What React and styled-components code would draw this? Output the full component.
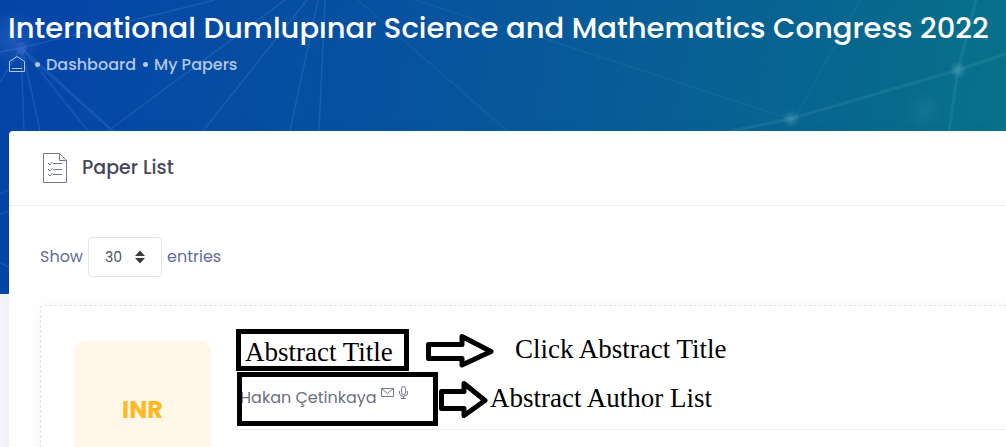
import React, { useState } from 'react';
import styled, { createGlobalStyle } from 'styled-components';

const GlobalStyle = createGlobalStyle`
  * {
    box-sizing: border-box;
  }

  body {
    margin: 0;
    background: #f5f5f9;
    color: #595d6e;
    font-family: Poppins, Inter, 'Open Sans', sans-serif;
    font-size: 16px;
  }
`;

const notes = {
  title: 'Click Abstract Title',
  authors: 'Abstract Author List',
};

function NetworkLines() {
  return (
    <Backdrop viewBox='0 0 1006 294' preserveAspectRatio='xMinYMin slice' aria-hidden='true'>
      <defs>
        <radialGradient id='glow'>
          <stop offset='0' stopColor='#6aa0ea' stopOpacity='0.22' />
          <stop offset='1' stopColor='#6aa0ea' stopOpacity='0' />
        </radialGradient>
        <radialGradient id='node'>
          <stop offset='0' stopColor='#7ab8d0' stopOpacity='0.4' />
          <stop offset='1' stopColor='#7ab8d0' stopOpacity='0' />
        </radialGradient>
      </defs>
      <circle cx='12' cy='38' r='30' fill='url(#glow)' />
      <circle cx='21' cy='48' r='6' fill='#3a62c8' opacity='0.5' />
      <g stroke='#5c94e0' strokeWidth='1.5' opacity='0.22' fill='none'>
        <path d='M21 48 L215 0' />
        <path d='M21 48 L0 52' />
        <path d='M21 48 L0 82' />
        <path d='M21 48 L24 131' />
        <path d='M22 48 L40 131' />
        <path d='M22 48 L88 131' />
        <path d='M22 48 L118 135' />
        <path d='M22 50 L112 131' />
        <path d='M285 0 L108 131' />
        <path d='M307 0 L203 131' />
        <path d='M318 0 L290 131' />
        <path d='M325 0 L319 131' />
        <path d='M0 194 Q40 176 60 131' />
        <path d='M0 214 L9 211' />
        <path d='M0 263 L9 267' />
      </g>
      <g stroke='#4c9cb4' strokeWidth='1.5' opacity='0.14' fill='none'>
        <path d='M358 0 L507 131' />
        <path d='M415 0 L503 28' />
        <path d='M503 25 L790 119' />
        <path d='M860 0 L795 118' />
      </g>
      <g stroke='#4fa3b3' strokeWidth='3' opacity='0.2' fill='none'>
        <path d='M790 119 L958 70 L1006 54' />
        <path d='M976 0 L958 70 L949 131' />
        <path d='M790 119 L730 131' />
      </g>
      <circle cx='791' cy='119' r='9' fill='url(#node)' />
      <circle cx='958' cy='70' r='9' fill='url(#node)' />
      <circle cx='924' cy='110' r='20' fill='url(#node)' opacity='0.25' />
    </Backdrop>
  );
}

function HomeIcon() {
  return (
    <svg width='16' height='16' viewBox='0 0 16 16' fill='none' stroke='currentColor' aria-hidden='true'>
      <path d='M0.5 5.5 L8 0.5 L15.5 5.5 V15.5 H0.5 Z' />
      <path d='M3 12.5 H13' />
    </svg>
  );
}

function ListIcon() {
  return (
    <svg width='26' height='32' viewBox='0 0 26 32' fill='none' stroke='#74788d' aria-hidden='true'>
      <path d='M1.5 1.5 H17.5 L24.5 8.5 V30.5 H1.5 Z' />
      <path d='M17.5 1.5 V8.5 H24.5' />
      <path d='M11 11.5 H20 M11 17.5 H20 M11 22.5 H20' />
      <path d='M6 11 L8 13 L10.5 10 M6 17 L8 19 L10.5 16 M6 22 L8 24 L10.5 21' />
    </svg>
  );
}

function MailIcon() {
  return (
    <svg width='13' height='9' viewBox='0 0 13 9' fill='none' stroke='currentColor' aria-hidden='true'>
      <path d='M0.5 0.5 H12.5 V8.5 H0.5 Z' />
      <path d='M1 1 L6.5 5.5 L12 1' />
    </svg>
  );
}

function MicIcon() {
  return (
    <svg width='9' height='13' viewBox='0 0 9 13' fill='none' stroke='currentColor' aria-hidden='true'>
      <rect x='2.5' y='0.5' width='4' height='8' rx='2' />
      <path d='M0.5 5 V7 Q0.5 10.2 4.5 10.2 Q8.5 10.2 8.5 7 V5 M4.5 10 V12.5 M2 12.5 H7' />
    </svg>
  );
}

function LongArrow() {
  return (
    <svg width='68' height='36' viewBox='0 0 68 36' fill='none' stroke='#000' strokeWidth='5' strokeLinejoin='round' aria-hidden='true'>
      <path d='M2.5 12.5 H36 V4.5 L65 19.5 L36 33 V26.5 H2.5 Z' />
    </svg>
  );
}

function ShortArrow() {
  return (
    <svg width='50' height='38' viewBox='0 0 50 38' fill='none' stroke='#000' strokeWidth='5' strokeLinejoin='round' aria-hidden='true'>
      <path d='M2.5 11.5 H25 V3.5 L46 20.5 L25 35.5 V28.5 H2.5 Z' />
    </svg>
  );
}

export default function App() {
  const [pageSize, setPageSize] = useState('30');

  return (
    <Page>
      <GlobalStyle />
      <Banner>
        <NetworkLines />
        <Title>International Dumlupınar Science and Mathematics Congress 2022</Title>
        <Breadcrumb aria-label='Breadcrumb'>
          <HomeLink href='#' aria-label='Home'>
            <HomeIcon />
          </HomeLink>
          <Dot />
          <Crumb href='#dashboard'>Dashboard</Crumb>
          <Dot />
          <Crumb href='#papers'>My Papers</Crumb>
        </Breadcrumb>
      </Banner>

      <Card>
        <CardHeader>
          <ListIcon />
          <CardTitle>Paper List</CardTitle>
        </CardHeader>
        <CardBody>
          <LengthBar>
            <Label htmlFor='page-size'>Show</Label>
            <SelectBox>
              <PageSize
                id='page-size'
                value={pageSize}
                onChange={(e) => setPageSize(e.target.value)}
              >
                <option value='10'>10</option>
                <option value='30'>30</option>
                <option value='50'>50</option>
              </PageSize>
              <Caret width='10' height='14' viewBox='0 0 10 14' aria-hidden='true'>
                <path d='M0 6 L5 0.5 L10 6 Z M0 8 H10 L5 13.5 Z' fill='#343a40' />
              </Caret>
            </SelectBox>
            <Label as='span'>entries</Label>
          </LengthBar>

          <Paper>
            <Badge>INR</Badge>
            <Details>
              <Row $gap={17}>
                <TitleFrame>Abstract Title</TitleFrame>
                <LongArrow />
                <Note $indent={4}>{notes.title}</Note>
              </Row>
              <Row $gap={1}>
                <AuthorFrame>
                  <Author>Hakan Çetinkaya</Author>
                  <AuthorIcons>
                    <MailIcon />
                    <MicIcon />
                  </AuthorIcons>
                </AuthorFrame>
                <ShortArrow />
                <Note>{notes.authors}</Note>
              </Row>
              <Divider />
            </Details>
          </Paper>
        </CardBody>
      </Card>
    </Page>
  );
}

const Page = styled.div`
  height: 100vh;
  overflow: hidden;
`;

const Banner = styled.header`
  position: relative;
  height: 294px;
  padding: 8px 8px 0;
  background: linear-gradient(100deg, #0444a8 0%, #07539f 40%, #08668f 80%, #077489 100%);
`;

const Backdrop = styled.svg`
  position: absolute;
  inset: 0;
  width: 100%;
  height: 100%;
`;

const Title = styled.h1`
  position: relative;
  margin: 0;
  color: #fff;
  font-size: 29px;
  font-weight: 500;
  line-height: 40px;
  white-space: nowrap;
`;

const Breadcrumb = styled.nav`
  position: relative;
  display: flex;
  align-items: center;
  height: 32px;
  color: #b3c7e5;
`;

const HomeLink = styled.a`
  display: flex;
  margin-right: 10px;
  padding-left: 1px;
  color: inherit;
`;

const Dot = styled.span`
  width: 5px;
  height: 5px;
  margin-right: 6px;
  border-radius: 50%;
  background: currentColor;
`;

const Crumb = styled.a`
  margin-right: 7px;
  color: inherit;
  font-weight: 500;
  text-decoration: none;
`;

const Card = styled.section`
  position: relative;
  margin: -163px 0 0 9px;
  min-height: 400px;
  border-radius: 4px 0 0 0;
  background: #fff;
  box-shadow: 0 0 13px rgba(82, 63, 105, 0.05);
`;

const CardHeader = styled.div`
  display: flex;
  align-items: center;
  gap: 14px;
  height: 75px;
  padding: 0 33px;
  border-bottom: 1px solid #ebedf2;
`;

const CardTitle = styled.h2`
  margin: 0;
  padding-bottom: 2px;
  color: #48465b;
  font-size: 19px;
  font-weight: 500;
`;

const CardBody = styled.div`
  padding: 31px 0 0 31px;
`;

const LengthBar = styled.div`
  display: flex;
  align-items: center;
  gap: 5px;
  color: #646c9a;
`;

const Label = styled.label`
  padding-bottom: 2px;
`;

const SelectBox = styled.div`
  position: relative;
`;

const PageSize = styled.select`
  display: block;
  width: 74px;
  height: 40px;
  padding: 0 16px;
  border: 1px solid #e2e5ec;
  border-radius: 4px;
  background: #fff;
  color: #495057;
  font: inherit;
  font-size: 14px;
  appearance: none;
`;

const Caret = styled.svg`
  position: absolute;
  top: 13px;
  right: 17px;
  pointer-events: none;
`;

const Paper = styled.article`
  display: flex;
  gap: 25px;
  margin-top: 28px;
  padding: 23px 0 23px 33px;
  border: 1px dashed #e1e1ef;
  border-right: 0;
  border-radius: 4px 0 0 0;
  box-shadow: 0 0 20px rgba(0, 0, 0, 0.04);
`;

const Badge = styled.div`
  display: flex;
  flex: none;
  align-items: center;
  justify-content: center;
  width: 137px;
  height: 137px;
  margin-top: 12px;
  border-radius: 10px;
  background: #fff7e7;
  color: #ffb822;
  font-size: 24px;
  font-weight: 700;
`;

const Details = styled.div`
  flex: 1;
`;

const Row = styled.div`
  display: flex;
  align-items: center;
  gap: ${(props) => props.$gap}px;
  margin-bottom: 1px;
`;

const TitleFrame = styled.div`
  width: 173px;
  height: 42px;
  padding-left: 4px;
  border: 5px solid #000;
  color: #000;
  font-family: 'Liberation Serif', serif;
  font-size: 27px;
  line-height: 36px;
  white-space: nowrap;
`;

const AuthorFrame = styled.div`
  display: flex;
  gap: 4px;
  width: 201px;
  height: 54px;
  margin-left: 1px;
  overflow: hidden;
  border: 5px solid #000;
  line-height: 42px;
`;

/* the frame is drawn over the first letter */
const Author = styled.span`
  margin-left: -2px;
  color: #6c7080;
  white-space: nowrap;
`;

const AuthorIcons = styled.span`
  display: flex;
  align-items: center;
  gap: 5px;
  height: 30px;
  color: #74788d;
`;

const Note = styled.span`
  margin-left: ${(props) => props.$indent || 0}px;
  padding-bottom: 2px;
  color: #000;
  font-family: 'Liberation Serif', serif;
  font-size: 27px;
  line-height: 36px;
  white-space: nowrap;
`;

const Divider = styled.hr`
  margin: 3px 0 0;
  border: 0;
  border-top: 1px solid #ebedf2;
`;
